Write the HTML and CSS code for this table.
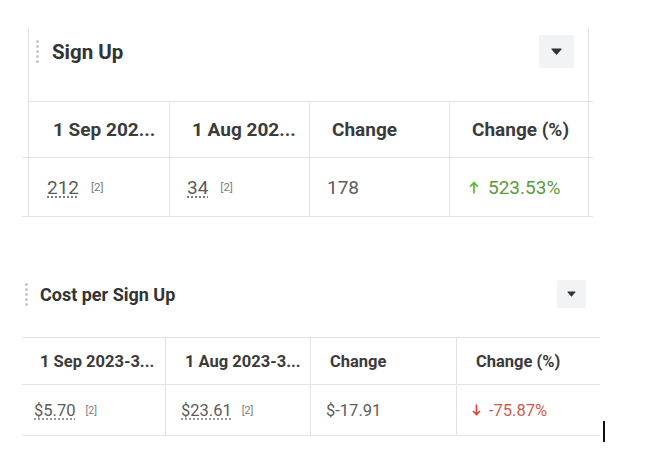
FILE: index.html
```html
<!DOCTYPE html>
<html lang="en">
<head>
<meta charset="utf-8">
<title>Sign Up metrics</title>
<link rel="stylesheet" href="styles.css">
</head>
<body>
<section class="w1">
  <div class="w1-head">
    <div class="handle"><span></span><span></span><span></span><span></span><span></span></div>
    <h2 class="title1">Sign Up</h2>
    <button class="dd dd1" aria-label="Options"><svg width="11" height="7" viewBox="0 0 11 7"><path d="M1 1h9L5.5 6z" fill="#333" stroke="#333" stroke-width="1.2" stroke-linejoin="round"/></svg></button>
  </div>
  <div class="w1-row w1-hrow">
    <div class="c1 first">1 Sep 202...</div>
    <div class="c1">1 Aug 202...</div>
    <div class="c1">Change</div>
    <div class="c1">Change (%)</div>
    <div class="pad"></div>
  </div>
  <div class="w1-drow">
    <div class="w1-row">
      <div class="d1 first"><span class="val">212</span><span class="ref">[2]</span></div>
      <div class="d1"><span class="val">34</span><span class="ref">[2]</span></div>
      <div class="d1">178</div>
      <div class="d1 up"><svg class="arr" width="10" height="13" viewBox="0 0 10 13"><path d="M5 12.5V2M1.2 5.6L5 1.6l3.8 4" fill="none" stroke="#5fbf3c" stroke-width="1.8"/></svg>523.53%</div>
      <div class="pad"></div>
    </div>
  </div>
</section>

<section class="w2">
  <div class="w2-head">
    <div class="handle"><span></span><span></span><span></span><span></span><span></span></div>
    <h2 class="title2">Cost per Sign Up</h2>
    <button class="dd dd2" aria-label="Options"><svg width="9" height="6" viewBox="0 0 9 6"><path d="M1 1h7L4.5 5z" fill="#333" stroke="#333" stroke-width="1.1" stroke-linejoin="round"/></svg></button>
  </div>
  <div class="w2-row w2-hrow">
    <div class="c2">1 Sep 2023-3...</div>
    <div class="c2">1 Aug 2023-3...</div>
    <div class="c2">Change</div>
    <div class="c2 last">Change (%)</div>
  </div>
  <div class="w2-row w2-drow">
    <div class="d2"><span class="val">$5.70</span><span class="ref">[2]</span></div>
    <div class="d2"><span class="val">$23.61</span><span class="ref">[2]</span></div>
    <div class="d2">$-17.91</div>
    <div class="d2 last down"><svg class="arr" width="9" height="12" viewBox="0 0 9 12"><path d="M4.5 0.5V10.5M1 7l3.5 3.6L8 7" fill="none" stroke="#d9483a" stroke-width="1.7"/></svg>-75.87%</div>
  </div>
</section>
<div class="cursor"></div>
</body>
</html>
```
FILE: styles.css
```css
* { box-sizing: border-box; }
body {
  margin: 0;
  background: #fff;
  font-family: Roboto, "Noto Sans", sans-serif;
  color: #3a3a3a;
}
h2 { margin: 0; }
.handle {
  display: flex;
  flex-direction: column;
  gap: 2px;
}
.handle span {
  width: 3px;
  height: 3px;
  border-radius: 50%;
  background: #c6c6c6;
}
.dd {
  margin-left: auto;
  border: 0;
  padding: 0;
  background: #f2f3f5;
  border-radius: 2px;
  display: flex;
  align-items: center;
  justify-content: center;
}
.val {
  text-decoration: underline dotted #777;
  text-underline-offset: 3px;
}
.ref {
  color: #7d7d7d;
  margin-left: 12px;
}
.arr { flex: none; }

/* widget 1 */
.w1 {
  margin: 27px 0 0 22px;
  width: 571px;
}
.w1-head {
  margin-left: 6px;
  width: 561px;
  height: 74px;
  border-left: 1px solid #e3e3e3;
  border-right: 1px solid #e3e3e3;
  display: flex;
  align-items: center;
  padding: 8px 14px 33px 7px;
}
.title1 {
  margin-left: 13px;
  font-size: 20.5px;
  font-weight: 700;
  color: #333;
}
.dd1 { width: 35px; height: 33px; }
.w1-row {
  display: grid;
  grid-template-columns: 142px 140px 140px 139px 1fr;
}
.w1-hrow {
  margin-left: 6px;
  width: 565px;
  border-top: 1px solid #e3e3e3;
}
.w1-drow {
  width: 571px;
  padding-left: 6px;
  border-top: 1px solid #e3e3e3;
  border-bottom: 1px solid #e3e3e3;
}
.c1, .d1 {
  border-right: 1px solid #e3e3e3;
  display: flex;
  align-items: center;
  white-space: nowrap;
}
.first { border-left: 1px solid #e3e3e3; }
.c1 {
  height: 55px;
  padding-left: 22px;
  font-size: 19px;
  font-weight: 700;
  color: #3b3b3b;
}
.c1.first { padding-left: 24px; }
.d1 {
  height: 58px;
  padding-left: 17px;
  font-size: 19px;
  color: #5c5c5c;
}
.d1.first { padding-left: 18px; }
.d1 .ref { font-size: 11.5px; }
.d1.up { color: #5a9a3c; padding-left: 19px; }
.d1.up .arr { margin-right: 9px; }

/* widget 2 */
.w2 {
  margin: 63px 0 0 22px;
  width: 578px;
}
.w2-head {
  height: 28px;
  display: flex;
  align-items: center;
  padding: 0 14px 0 3px;
  margin-bottom: 29px;
}
.title2 {
  margin-left: 12px;
  font-size: 18px;
  font-weight: 700;
  color: #333;
}
.dd2 { width: 29px; height: 28px; }
.w2-row {
  display: grid;
  grid-template-columns: 144px 145px 146px 1fr;
  border-top: 1px solid #e3e3e3;
}
.w2-drow { border-bottom: 1px solid #e3e3e3; }
.c2, .d2 {
  border-right: 1px solid #e3e3e3;
  display: flex;
  align-items: center;
  white-space: nowrap;
}
.c2.last, .d2.last { border-right: 0; }
.c2 {
  height: 46px;
  padding-left: 19px;
  font-size: 16.5px;
  font-weight: 700;
  color: #3b3b3b;
}
.c2:first-child { padding-left: 18px; }
.d2 {
  height: 50px;
  padding-left: 15px;
  font-size: 16.5px;
  color: #5c5c5c;
}
.d2:first-child { padding-left: 12px; }
.d2 .ref { font-size: 10.5px; margin-left: 10px; }
.d2.down { color: #cf5a4c; }
.d2.down .arr { margin-right: 8px; }

.cursor {
  position: absolute;
  left: 603px;
  top: 421px;
  width: 2px;
  height: 21px;
  background: #111;
}
```
